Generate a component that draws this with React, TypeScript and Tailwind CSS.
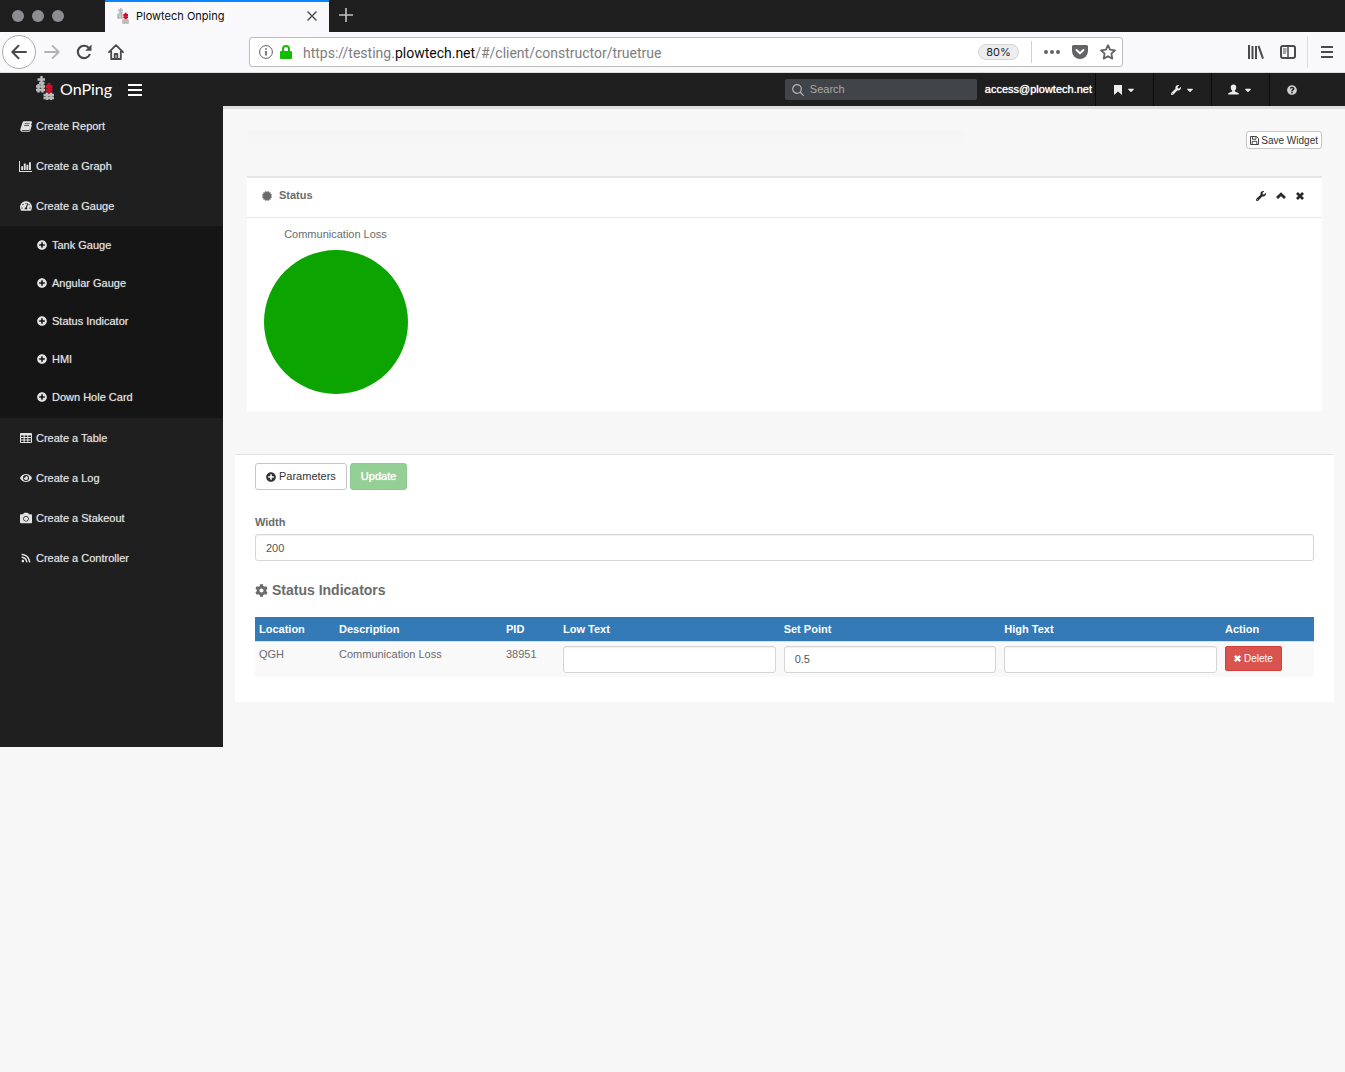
import type { ReactNode } from 'react';
import {
  FaCamera,
  FaCaretDown,
  FaCertificate,
  FaCog,
  FaEye,
  FaPlusCircle,
  FaQuestionCircle,
  FaRss,
  FaTachometerAlt,
  FaWrench,
} from 'react-icons/fa';

const LogoMark = ({ className }: { className: string }) => (
  <svg viewBox="0 0 18 24" className={className} fill="none" strokeWidth="2.400" aria-hidden="true">
    <g stroke="#b9b9b9">
      <path d="M5.500 0v9M1.500 3.500h7.500M3 7h5.500" />
      <path d="M2.500 8v8.500M6.500 8v8.500M0 10.500h9M0 14h9" />
      <path d="M11 16.500v7.500M15 16.500v7.500M7.500 19h10.500M7.500 22h10.500" />
    </g>
    <path stroke="#cf0f26" strokeWidth="3" d="M13 7v10M9.500 10.500h7M9.500 14h7" />
  </svg>
);

const BookIcon = () => (
  <svg viewBox="0 0 14 12" className="h-[11px] w-3" aria-hidden="true">
    <path
      fill="currentColor"
      d="M5 0h8q1.200 0 .9 1.300L11.500 9q-.3 1-1.400 1H2.600q-.8 0-.7.500.2.500.9.500h8.200l2-7 .8.500L11.800 11.300q-.3.700-1.200.7H2.400Q.5 12 .3 10q0-.7.300-1.500L2.900 1.300Q3.400 0 5 0z"
    />
    <path stroke="#1f1f1f" strokeWidth=".8" d="M5.500 2.700h5.600M4.900 4.900h5.600" />
  </svg>
);

const BarsIcon = () => (
  <svg viewBox="0 0 13 11" className="h-[11px] w-[13px]" fill="currentColor" aria-hidden="true">
    <path d="M0 0h1v10h12v1H0z" />
    <path d="M2.200 5.200h1.900v3.900H2.200zM4.800 2.500h1.900v6.600H4.800zM7.400 3.800h1.900v5.300H7.400zM10 1.200h1.900v7.900H10z" />
  </svg>
);

const TableIcon = () => (
  <svg viewBox="0 0 12 10" className="h-[10px] w-3" aria-hidden="true">
    <rect width="12" height="10" rx="1" fill="currentColor" />
    <path
      fill="#1f1f1f"
      d="M1 2.500h2.600v1.600H1zM4.700 2.500h2.600v1.600H4.700zM8.400 2.500H11v1.600H8.400zM1 5h2.600v1.600H1zM4.700 5h2.600v1.600H4.700zM8.400 5H11v1.600H8.400zM1 7.500h2.600V9H1zM4.700 7.500h2.600V9H4.700zM8.400 7.500H11V9H8.400z"
    />
  </svg>
);

const BookmarkIcon = () => (
  <svg viewBox="0 0 8 10" className="h-[10px] w-2" fill="currentColor" aria-hidden="true">
    <path d="M0 0h8v10L4 6.500 0 10z" />
  </svg>
);

const UserIcon = () => (
  <svg viewBox="0 0 12 12" className="size-[11px]" fill="currentColor" aria-hidden="true">
    <path d="M6 .5c1.900 0 3 1.300 3 3.200 0 1.500-.6 2.700-1.500 3.500v1l3.300 1.400c.7.300 1 .8 1 1.900H.2c0-1.100.3-1.600 1-1.900l3.300-1.400v-1C3.600 6.400 3 5.200 3 3.700 3 1.800 4.100.5 6 .5z" />
  </svg>
);

const SaveIcon = () => (
  <svg viewBox="0 0 9 9" className="size-[9px]" fill="none" stroke="currentColor" strokeWidth=".9" aria-hidden="true">
    <path d="M.5.5h6l2 2v6h-8zM2.500.5v2.700h3.500V.5M2.200 8.500V5.300h4.600v3.200" />
  </svg>
);

const ChevronIcon = () => (
  <svg viewBox="0 0 10 7" className="h-[7px] w-[10px]" fill="none" stroke="currentColor" strokeWidth="2.800" aria-hidden="true">
    <path d="M1 6l4-3.800L9 6" />
  </svg>
);

const CrossIcon = ({ className }: { className: string }) => (
  <svg viewBox="0 0 10 10" className={className} fill="none" stroke="currentColor" strokeWidth="3.400" aria-hidden="true">
    <path d="M1.200 1.200l7.600 7.600M8.800 1.200L1.200 8.800" />
  </svg>
);

const menuTop = [
  { label: 'Create Report', icon: <BookIcon /> },
  { label: 'Create a Graph', icon: <BarsIcon /> },
  { label: 'Create a Gauge', icon: <FaTachometerAlt className="size-3" /> },
];

const gauges = ['Tank Gauge', 'Angular Gauge', 'Status Indicator', 'HMI', 'Down Hole Card'];

const menuBottom = [
  { label: 'Create a Table', icon: <TableIcon /> },
  { label: 'Create a Log', icon: <FaEye className="size-3" /> },
  { label: 'Create a Stakeout', icon: <FaCamera className="size-3" /> },
  { label: 'Create a Controller', icon: <FaRss className="size-[10px]" /> },
];

const inputClass =
  'h-[27px] w-full rounded-[3px] border border-[#d5d5d5] bg-white px-[10px] text-[11px] text-[#555] shadow-[inset_0_1px_1px_rgba(0,0,0,0.06)] outline-none';

const BrowserTabs = () => (
  <div className="flex h-8 items-stretch bg-[#1f1f1f]">
    <div className="flex w-[105px] items-center gap-2 pl-3">
      <span className="size-3 rounded-full bg-[#8e8c92]" />
      <span className="size-3 rounded-full bg-[#8e8c92]" />
      <span className="size-3 rounded-full bg-[#8e8c92]" />
    </div>
    <div className="flex w-56 items-center border-t-2 border-[#0a84ff] bg-[#f9f9fb] px-3 pb-[2px]">
      <LogoMark className="h-4 w-3" />
      <span className="ml-[7px] flex-1 font-[Inter,sans-serif] text-[11px] text-[#0c0c0d]">Plowtech Onping</span>
      <button type="button" aria-label="Close tab">
        <svg viewBox="0 0 10 10" className="size-[10px]" stroke="#4a4a4f" strokeWidth="1.400" aria-hidden="true">
          <path d="M.5.5l9 9M9.500.5l-9 9" />
        </svg>
      </button>
    </div>
    <button type="button" aria-label="New tab" className="flex items-center px-[10px] pb-[2px]">
      <svg viewBox="0 0 14 14" className="size-[14px]" stroke="#c4c4c6" strokeWidth="1.600" aria-hidden="true">
        <path d="M7 0v14M0 7h14" />
      </svg>
    </button>
  </div>
);

const BrowserToolbar = () => (
  <div className="flex h-[41px] items-center border-b border-[#dcdcdc] bg-[#f9f9fb] text-[#4a4a4c]">
    <div className="flex w-[249px] items-center gap-2 pl-[2px]">
      <button type="button" aria-label="Back" className="flex size-[34px] items-center justify-center rounded-full border border-[#ababab] bg-white">
        <svg viewBox="0 0 16 16" className="size-4" fill="none" stroke="currentColor" strokeWidth="2" strokeLinecap="round" strokeLinejoin="round" aria-hidden="true">
          <path d="M15 8H1.500M7.500 1.800L1.300 8l6.200 6.200" />
        </svg>
      </button>
      <button type="button" aria-label="Forward" className="text-[#b3b3b5]">
        <svg viewBox="0 0 16 16" className="size-4" fill="none" stroke="currentColor" strokeWidth="1.800" strokeLinecap="round" strokeLinejoin="round" aria-hidden="true">
          <path d="M1 8h13.500M8.500 1.800L14.700 8l-6.200 6.200" />
        </svg>
      </button>
      <button type="button" aria-label="Reload" className="ml-2">
        <svg viewBox="0 0 16 16" className="size-4" fill="none" stroke="currentColor" strokeWidth="2.200" aria-hidden="true">
          <path d="M13 4.200A6.200 6.200 0 1 0 13.900 10" />
          <path d="M15.500.5v6.300H9.200z" fill="currentColor" stroke="none" />
        </svg>
      </button>
      <button type="button" aria-label="Home" className="ml-2">
        <svg viewBox="0 0 16 16" className="size-4" fill="none" stroke="currentColor" strokeWidth="1.800" strokeLinejoin="round" strokeLinecap="round" aria-hidden="true">
          <path d="M1 8.200L8 1.200l7 7M3.200 7.500V15h9.600V7.500" />
          <path d="M6.700 14.500V10h2.600v4.500" />
        </svg>
      </button>
    </div>
    <div className="flex h-[30px] flex-1 items-center rounded-[3px] border border-[#bcbcbc] bg-white pr-[6px] pl-[9px]">
      <svg viewBox="0 0 14 14" className="size-[14px]" fill="none" stroke="#5f5f61" aria-hidden="true">
        <circle cx="7" cy="7" r="6.400" />
        <path strokeWidth="1.600" d="M7 6v4.500M7 3.300v1.500" />
      </svg>
      <svg viewBox="0 0 12 14" className="ml-[7px] h-[14px] w-3" aria-hidden="true">
        <rect y="6" width="12" height="8" rx="1" fill="#12bc00" />
        <path d="M3 7V4a3 3 0 0 1 6 0v3" fill="none" stroke="#12bc00" strokeWidth="2" />
      </svg>
      <p className="ml-[11px] flex-1 pt-[2px] font-[Roboto,sans-serif] text-sm text-[#7d7d7f]">
        https://testing.<span className="text-[#0c0c0d]">plowtech.net</span>/#/client/constructor/truetrue
      </p>
      <span className="flex h-4 w-[41px] items-center justify-center rounded-full border border-[#d4d4d6] bg-[#ededf0] font-[Inter,sans-serif] text-[11px] text-[#1c1c1d]">
        80%
      </span>
      <span className="ml-3 h-[22px] w-px bg-[#d0d0d2]" />
      <div className="ml-3 flex items-center gap-3 text-[#636365]">
        <svg viewBox="0 0 16 4" className="h-1 w-4" fill="currentColor" aria-hidden="true">
          <circle cx="2" cy="2" r="2" />
          <circle cx="8" cy="2" r="2" />
          <circle cx="14" cy="2" r="2" />
        </svg>
        <svg viewBox="0 0 16 14" className="h-[14px] w-4" aria-hidden="true">
          <path fill="currentColor" d="M1.500 0h13A1.500 1.500 0 0 1 16 1.500V6A8 8 0 0 1 0 6V1.500A1.500 1.500 0 0 1 1.500 0z" />
          <path fill="none" stroke="#fff" strokeWidth="2" strokeLinecap="round" strokeLinejoin="round" d="M4.500 5L8 8.300 11.500 5" />
        </svg>
        <svg viewBox="0 0 16 16" className="size-4" fill="none" stroke="currentColor" strokeWidth="1.800" strokeLinejoin="round" aria-hidden="true">
          <path d="M8 1.200l2.100 4.500 4.900.6-3.600 3.400.9 4.900L8 12.200l-4.300 2.400.9-4.900L1 6.300l4.900-.6z" />
        </svg>
      </div>
    </div>
    <div className="flex w-[222px] items-center justify-end self-stretch pr-3">
      <svg viewBox="0 0 16 14" className="h-[14px] w-4" fill="none" stroke="currentColor" strokeWidth="2" aria-hidden="true">
        <path d="M1 0v14M4.500 1v13M8 1v13M10.500.8L15 13.600" />
      </svg>
      <svg viewBox="0 0 16 14" className="ml-4 h-[14px] w-4" fill="none" stroke="currentColor" strokeWidth="2" aria-hidden="true">
        <rect x="1" y="1" width="14" height="12" rx="2" />
        <path strokeWidth="1.500" d="M8 1v12" />
        <path strokeWidth="1" d="M3 4h3.500M3 6h3.500M3 8h3" />
      </svg>
      <span className="ml-[11px] h-8 w-px bg-[#dcdcde]" />
      <svg viewBox="0 0 12 12" className="ml-[13px] size-3" stroke="currentColor" strokeWidth="2" aria-hidden="true">
        <path d="M0 1h12M0 6h12M0 11h12" />
      </svg>
    </div>
  </div>
);

const NavButton = ({ label, children }: { label: string; children: ReactNode }) => (
  <button
    type="button"
    aria-label={label}
    className="flex w-[58px] items-center justify-center gap-1 self-stretch border-l border-[#0c0c0c] text-[#ececec]"
  >
    {children}
  </button>
);

const AppHeader = () => (
  <header className="flex h-[33px] items-center bg-[#1f1f1f]">
    <a href="#/" className="ml-9 flex items-center pb-[3px] text-white">
      <LogoMark className="h-6 w-[18px]" />
      <span className="ml-[6px] pt-[2px] font-[Lato,sans-serif] text-[16px] leading-5">OnPing</span>
    </a>
    <button type="button" aria-label="Toggle menu" className="ml-4 flex flex-col gap-[3px]">
      <span className="h-[2px] w-[14px] bg-white" />
      <span className="h-[2px] w-[14px] bg-white" />
      <span className="h-[2px] w-[14px] bg-white" />
    </button>
    <div className="ml-auto flex h-[21px] w-48 items-center rounded-[2px] bg-[#414449] pl-[7px]">
      <svg viewBox="0 0 12 12" className="size-3" fill="none" stroke="#b5b5b5" strokeWidth="1.200" aria-hidden="true">
        <circle cx="5" cy="5" r="4.300" />
        <path d="M8 8l3.700 3.700" />
      </svg>
      <input
        type="text"
        aria-label="Search"
        placeholder="Search"
        className="ml-[6px] min-w-0 flex-1 bg-transparent text-[11px] text-white outline-none placeholder:text-[#a9a9a9]"
      />
    </div>
    <a href="#/account" className="mr-[3px] ml-2 text-[11px] text-white [text-shadow:0_0_1px_#fff]">
      access@plowtech.net
    </a>
    <nav className="mr-8 flex self-stretch">
      <NavButton label="Bookmarks">
        <BookmarkIcon />
        <FaCaretDown className="size-[10px]" />
      </NavButton>
      <NavButton label="Tools">
        <FaWrench className="size-[10px]" />
        <FaCaretDown className="size-[10px]" />
      </NavButton>
      <NavButton label="User">
        <UserIcon />
        <FaCaretDown className="size-[10px]" />
      </NavButton>
      <button
        type="button"
        aria-label="Help"
        className="flex w-11 items-center justify-center self-stretch border-l border-[#0c0c0c] text-[#d0d0d0]"
      >
        <FaQuestionCircle className="size-[10px]" />
      </button>
    </nav>
  </header>
);

const MenuItem = ({ label, icon }: { label: string; icon: ReactNode }) => (
  <li>
    <a href="#/client/constructor" className="flex h-10 items-center pl-[19px]">
      <span className="mr-1 flex w-[13px] justify-center">{icon}</span>
      {label}
    </a>
  </li>
);

const Sidebar = () => (
  <aside className="w-[223px] shrink-0 bg-[#1f1f1f] pb-[169px] text-[11px] text-[#e2e2e2] [text-shadow:0_0_1px_#8a8a8a]">
    <ul>
      {menuTop.map((item) => (
        <MenuItem key={item.label} {...item} />
      ))}
      <li>
        <ul className="bg-[#151515] pb-[2px]">
          {gauges.map((label) => (
            <li key={label}>
              <a href="#/client/constructor" className="flex h-[38px] items-center gap-[5px] pl-[37px]">
                <FaPlusCircle className="size-[10px]" />
                {label}
              </a>
            </li>
          ))}
        </ul>
      </li>
      {menuBottom.map((item) => (
        <MenuItem key={item.label} {...item} />
      ))}
    </ul>
  </aside>
);

const StatusPanel = () => (
  <section className="mr-[23px] ml-6 border-t-2 border-[#e4e6e9] bg-white">
    <div className="flex h-10 items-center border-b border-[#e7e7e7] pr-[18px] pb-1 pl-[15px]">
      <FaCertificate className="size-[10px]" />
      <h2 className="ml-[7px] flex-1 text-[11px] font-bold">Status</h2>
      <div className="flex items-center gap-[10px] text-[#2b2b2b]">
        <button type="button" aria-label="Settings">
          <FaWrench className="size-[10px]" />
        </button>
        <button type="button" aria-label="Collapse">
          <ChevronIcon />
        </button>
        <button type="button" aria-label="Close">
          <CrossIcon className="size-2" />
        </button>
      </div>
    </div>
    <div className="px-2 pt-2 pb-[17px]">
      <div className="flex w-[161px] flex-col items-center">
        <span className="leading-4">Communication Loss</span>
        <svg viewBox="0 0 144 144" className="mt-2 size-36" role="img" aria-label="Communication Loss status">
          <circle cx="72" cy="72" r="72" fill="#0ca400" />
        </svg>
      </div>
    </div>
  </section>
);

const headings = ['Location', 'Description', 'PID', 'Low Text', 'Set Point', 'High Text', 'Action'];

const EditorPanel = () => (
  <section className="mt-[43px] mr-[11px] ml-3 border-t border-[#e4e4e4] bg-white px-5 pt-2 pb-[25px]">
    <div className="flex gap-[3px]">
      <button
        type="button"
        className="flex h-[27px] items-center gap-[3px] rounded-[3px] border border-[#c6c6c6] px-[10px] text-[#333]"
      >
        <FaPlusCircle className="size-[10px]" />
        Parameters
      </button>
      <button
        type="button"
        className="h-[27px] rounded-[3px] border border-[#8ccb8e] bg-[#94d096] px-[10px] text-white [text-shadow:0_0_1px_#fff]"
      >
        Update
      </button>
    </div>
    <label htmlFor="width" className="mt-6 block leading-4 font-bold">
      Width
    </label>
    <input id="width" type="text" defaultValue="200" className={`mt-1 ${inputClass}`} />
    <h3 className="mt-5 flex items-center gap-1 text-[14px] leading-[18px] font-bold">
      <FaCog className="size-[13px]" />
      Status Indicators
    </h3>
    <table className="mt-[18px] w-full table-fixed text-left">
      <colgroup>
        <col className="w-20" />
        <col className="w-[167px]" />
        <col className="w-[57px]" />
        <col />
        <col />
        <col />
        <col className="w-[93px]" />
      </colgroup>
      <thead>
        <tr className="h-6 bg-[#337ab7] text-white">
          {headings.map((h) => (
            <th key={h} scope="col" className="px-1 font-bold">
              {h}
            </th>
          ))}
        </tr>
      </thead>
      <tbody>
        <tr className="border-t border-[#ddd] bg-[#f9f9f9] align-top">
          <td className="px-1 py-1 leading-4">QGH</td>
          <td className="px-1 py-1 leading-4">Communication Loss</td>
          <td className="px-1 py-1 leading-4">38951</td>
          <td className="p-1">
            <input type="text" aria-label="Low Text" className={`block ${inputClass}`} />
          </td>
          <td className="p-1">
            <input type="text" aria-label="Set Point" defaultValue="0.5" className={`block ${inputClass}`} />
          </td>
          <td className="p-1">
            <input type="text" aria-label="High Text" className={`block ${inputClass}`} />
          </td>
          <td className="p-1">
            <button
              type="button"
              className="flex h-[25px] items-center gap-[3px] rounded-[2px] border border-[#d43f3a] bg-[#d9534f] px-2 text-[10px] text-white"
            >
              <CrossIcon className="size-[7px]" />
              Delete
            </button>
          </td>
        </tr>
      </tbody>
    </table>
  </section>
);

const App = () => {
  return (
    <div className="min-h-screen bg-[#f7f7f7] font-['Liberation_Sans',Arial,sans-serif] text-[11px] text-[#6b6b6b]">
      <BrowserTabs />
      <BrowserToolbar />
      <AppHeader />
      <div className="flex items-start">
        <Sidebar />
        <main className="min-w-0 flex-1 border-t-[3px] border-[#dedede]">
          <div className="mt-[22px] mr-[23px] mb-[27px] ml-6 flex items-start justify-between">
            <div className="h-3 w-2/3 bg-[#f5f5f5]" />
            <button
              type="button"
              className="flex h-[18px] items-center gap-[2px] rounded-[3px] border border-[#c6c6c6] bg-white px-[3px] text-[10px] text-[#333]"
            >
              <SaveIcon />
              Save Widget
            </button>
          </div>
          <StatusPanel />
          <EditorPanel />
        </main>
      </div>
    </div>
  );
};

export default App;
